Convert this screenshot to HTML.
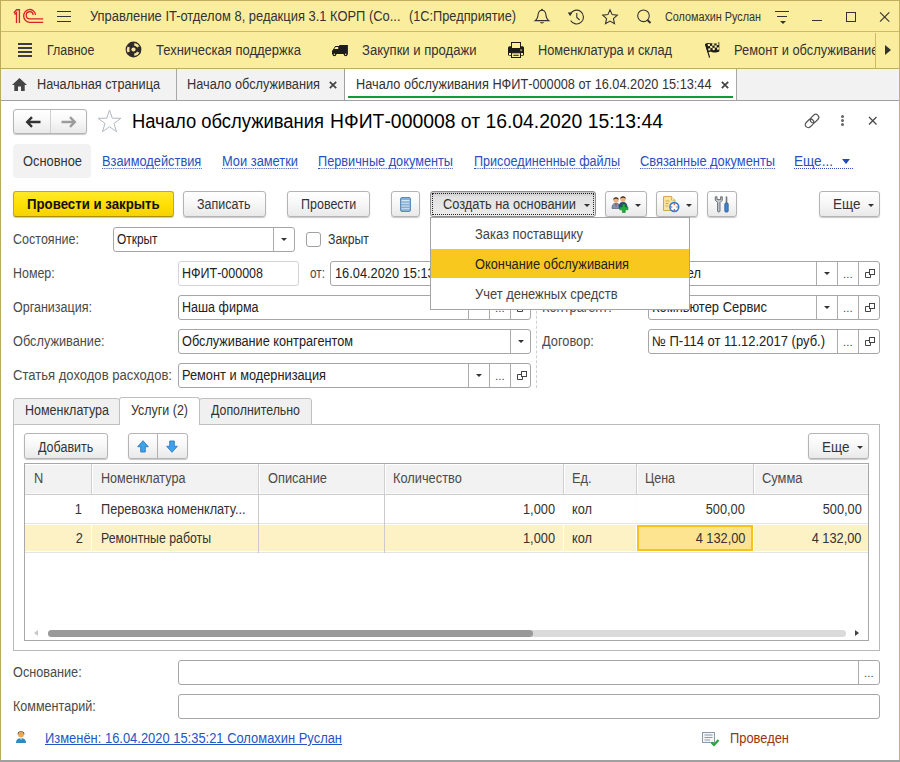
<!DOCTYPE html>
<html><head><meta charset="utf-8">
<style>
*{box-sizing:border-box;margin:0;padding:0}
html,body{width:900px;height:762px;overflow:hidden;background:#fff}
body{font-family:"Liberation Sans",sans-serif;font-size:14px;color:#333;position:relative}
.a{position:absolute}
.x{position:absolute;white-space:nowrap;font-size:14px;line-height:16px;color:#333;transform:scaleX(.915);transform-origin:0 0}
.r{transform-origin:100% 0;text-align:right}
.lb{color:#4a4a4a}
.lk{color:#2850be}
.lk i{position:absolute;left:0;right:0;top:15px;height:0;border-bottom:1px dotted #2850be}
.btn{position:absolute;border:1px solid #b4b4b4;border-radius:3px;background:linear-gradient(#ffffff,#f8f8f8 45%,#e9e9e9);box-shadow:0 1px 1px rgba(0,0,0,.22)}
.f{position:absolute;height:25px;border:1px solid #a6a6a6;border-radius:3px;background:#fff}
.f .t{position:absolute;left:3px;top:3px;white-space:nowrap;line-height:16px;color:#222;font-size:14px;transform:scaleX(.915);transform-origin:0 0}
.f .d{position:absolute;top:0;width:1px;height:23px;background:#ababab}
.f .ar{position:absolute;top:10px;width:0;height:0;border-left:3px solid transparent;border-right:3px solid transparent;border-top:3.5px solid #333}
.f .el{position:absolute;top:4px;font-size:11.5px;line-height:16px;color:#444;letter-spacing:0}
.f svg{position:absolute;top:6px}
.ar2{position:absolute;width:0;height:0;border-left:3px solid transparent;border-right:3px solid transparent;border-top:3.5px solid #333}
</style></head><body>
<div class="a" style="left:0;top:0;width:900px;height:32px;background:#fbed9e;border-bottom:1px solid #cdbb62"></div>
<div class="a" style="left:0;top:32px;width:900px;height:37px;background:#fbed9e;border-bottom:1px solid #bead5e"></div>
<div class="a" style="left:0;top:69px;width:900px;height:32px;background:#f2f2f2;border-bottom:1px solid #a0a0a4"></div>
<!-- 1C logo -->
<svg class="a" style="left:13px;top:8px" width="32" height="17" viewBox="0 0 32 17"><g fill="none" stroke="#dc2128" stroke-width="1.350"><path d="M0.900 5 L3.600 1.700 H6.400 V14.900"/><path d="M1.500 6.600 L3.500 4.600 V14.900"/><path d="M22.600 6.800 A6 6.400 0 1 0 16.800 14.300 H30.200"/><path d="M20.200 6.800 A3.500 3.600 0 1 0 16.800 10.900 H30.200"/></g></svg>
<!-- hamburger -->
<div class="a" style="left:57px;top:11px;width:14px;height:1px;background:#333"></div>
<div class="a" style="left:57px;top:16px;width:14px;height:1px;background:#333"></div>
<div class="a" style="left:57px;top:21px;width:14px;height:1px;background:#333"></div>
<span class="x" style="transform:scaleX(0.9225);left:90px;top:8px">Управление IT-отделом 8, редакция 3.1 КОРП (Со...</span>
<span class="x" style="transform:scaleX(0.9114);left:409px;top:8px">(1С:Предприятие)</span>
<!-- bell -->
<svg class="a" style="left:533px;top:8px" width="18" height="18" viewBox="0 0 18 18"><g fill="none" stroke="#333" stroke-width="1.100"><path d="M2.300 12.600 C5 11 4.800 8 5.200 6 C5.700 3.200 7.400 2.200 9 2.200 C10.600 2.200 12.300 3.200 12.800 6 C13.200 8 13 11 15.700 12.600 Z"/></g><circle cx="9" cy="1.700" r="0.900" fill="#333"/><path d="M6.800 14.200 H11.200 Q9 16.800 6.800 14.200 Z" fill="#333"/></svg>
<!-- history -->
<svg class="a" style="left:567px;top:8px" width="18" height="18" viewBox="0 0 18 18"><g fill="none" stroke="#333" stroke-width="1.100"><path d="M3.300 6.200 A6.900 6.900 0 1 1 3.600 12.500"/><path d="M9.800 5 V9.400 L12.600 12"/></g><path d="M0.800 4.600 L5.400 4.200 L3.200 8.200 Z" fill="#333"/></svg>
<!-- star -->
<svg class="a" style="left:601px;top:7.700px" width="18" height="18" viewBox="0 0 18 18"><path d="M9 1.800 L11.100 6.600 L16.300 7.100 L12.400 10.600 L13.500 15.700 L9 13.100 L4.500 15.700 L5.600 10.600 L1.700 7.100 L6.900 6.600 Z" fill="none" stroke="#333" stroke-width="1.1" stroke-linejoin="miter"/></svg>
<!-- search -->
<svg class="a" style="left:635px;top:8px" width="18" height="18" viewBox="0 0 18 18"><g fill="none" stroke="#333" stroke-width="1.1"><circle cx="8.500" cy="7.800" r="5.800"/><path d="M12.500 12 L15.500 15" stroke-width="2"/></g></svg>
<span class="x" style="transform:scaleX(0.9001);left:665px;top:9px;font-size:12px">Соломахин Руслан</span>
<!-- filter -->
<div class="a" style="left:775px;top:11px;width:14px;height:1px;background:#333"></div>
<div class="a" style="left:777px;top:16px;width:10px;height:1px;background:#333"></div>
<div class="ar2" style="left:779.500px;top:21px;border-top-color:#333"></div>
<!-- min max close -->
<div class="a" style="left:812px;top:20px;width:10px;height:1px;background:#333"></div>
<div class="a" style="left:846px;top:12px;width:10px;height:10px;border:1px solid #333"></div>
<svg class="a" style="left:879px;top:11px" width="12" height="12" viewBox="0 0 12 12"><path d="M1 1.300 L10.300 10.600 M10.300 1.300 L1 10.600" stroke="#333" stroke-width="1.1"/></svg>
<!-- section bar -->
<div class="a" style="left:18px;top:43px;width:14px;height:2px;background:#3a3d48"></div>
<div class="a" style="left:18px;top:47px;width:14px;height:2px;background:#3a3d48"></div>
<div class="a" style="left:18px;top:51px;width:14px;height:2px;background:#3a3d48"></div>
<div class="a" style="left:18px;top:55px;width:14px;height:2px;background:#3a3d48"></div>
<span class="x" style="transform:scaleX(0.8860);left:47px;top:42px">Главное</span>
<svg class="a" style="left:125.300px;top:41.300px" width="17" height="17" viewBox="0 0 17 17"><circle cx="8.500" cy="8.500" r="7.900" fill="#2f2a2c"/><circle cx="8.500" cy="8.500" r="2.100" fill="#f6e596"/><path d="M9.25 3.15 A5.4 5.4 0 0 1 13.27 5.96 M13.27 11.04 A5.4 5.4 0 0 1 9.25 13.85 M3.69 10.95 A5.4 5.4 0 0 1 3.69 6.05" fill="none" stroke="#f6e596" stroke-width="2.500"/></svg>
<span class="x" style="transform:scaleX(0.9287);left:156px;top:42px">Техническая поддержка</span>
<svg class="a" style="left:331px;top:44px" width="18" height="13" viewBox="0 0 18 13"><path d="M1 9.900 V7 L4.300 2 H8.300 V1 H16.900 V9.900 Z" fill="#1c1c1c"/><path d="M4.600 2.900 H7.200 V5 H3.200 Z" fill="#fbed9e"/><circle cx="3.400" cy="10.300" r="1.900" fill="#1c1c1c"/><circle cx="3.400" cy="10.300" r="0.700" fill="#fbed9e"/><circle cx="14.700" cy="10.300" r="1.900" fill="#1c1c1c"/><circle cx="14.700" cy="10.300" r="0.700" fill="#fbed9e"/></svg>
<span class="x" style="transform:scaleX(0.9336);left:362px;top:42px">Закупки и продажи</span>
<svg class="a" style="left:507px;top:41px" width="18" height="18" viewBox="0 0 18 18"><rect x="1" y="5.300" width="16" height="9.500" rx="1.500" fill="#1c1c1c"/><rect x="4.500" y="1.500" width="9" height="6" fill="#fbed9e" stroke="#1c1c1c"/><rect x="13.200" y="8.200" width="1.900" height="1.900" fill="#9a9060"/><rect x="2" y="12" width="2" height="2" fill="#fbed9e"/><rect x="14" y="12" width="2" height="2" fill="#fbed9e"/><rect x="4.500" y="11.800" width="9" height="4.700" fill="#fbed9e" stroke="#1c1c1c"/><path d="M6.300 14.300 H11.700" stroke="#1c1c1c" stroke-width="1"/></svg>
<span class="x" style="transform:scaleX(0.9118);left:538px;top:42px">Номенклатура и склад</span>
<svg class="a" style="left:704px;top:41px" width="18" height="18" viewBox="0 0 18 18"><path d="M1.600 3.200 L5.600 16.600" stroke="#1c1c1c" stroke-width="1.200"/><path d="M1 3.200 C4.500 0.200 9 4.200 15.300 1.200 L15.300 10.500 C10 13.200 6.500 9.200 3.600 11.400 Z" fill="#1c1c1c"/><g fill="#fbed9e" transform="rotate(-6 8 6)"><rect x="4" y="2.600" width="2.200" height="2.200"/><rect x="8.400" y="2.600" width="2.200" height="2.200"/><rect x="12.800" y="2.600" width="2" height="2.200"/><rect x="6.200" y="4.800" width="2.200" height="2.200"/><rect x="10.600" y="4.800" width="2.200" height="2.200"/><rect x="4" y="7" width="2.200" height="2.200"/><rect x="8.400" y="7" width="2.200" height="2.200"/><rect x="12.800" y="7" width="2" height="2.200"/></g></svg>
<div class="a" style="left:734px;top:36px;width:141px;height:30px;overflow:hidden"><span class="x" style="left:0;top:6px;transform:scaleX(.918)">Ремонт и обслуживание</span></div>
<div class="a" style="left:875px;top:33px;width:24px;height:35px;background:#fbed9e;border-left:1px solid #cdbb62"></div>
<div class="a" style="left:885px;top:45px;width:0;height:0;border-top:5px solid transparent;border-bottom:5px solid transparent;border-left:6px solid #333"></div>
<!-- open tabs -->
<svg class="a" style="left:11px;top:77px" width="17" height="15" viewBox="0 0 17 15"><path d="M8.500 1 L16 8 H13.700 V14 H10 V9.500 H7 V14 H3.300 V8 H1 Z" fill="#444"/></svg>
<span class="x" style="transform:scaleX(0.9080);left:37px;top:76px">Начальная страница</span>
<div class="a" style="left:176px;top:69px;width:1px;height:31px;background:#a8a8a8"></div>
<span class="x" style="transform:scaleX(0.9108);left:187px;top:76px">Начало обслуживания</span>
<svg class="a" style="left:329px;top:81px" width="8" height="8" viewBox="0 0 8 8"><path d="M0.800 0.800 L7.200 7.200 M7.200 0.800 L0.800 7.200" stroke="#444" stroke-width="1.700"/></svg>
<div class="a" style="left:344px;top:69px;width:1px;height:31px;background:#a0a0a0"></div>
<div class="a" style="left:345px;top:69px;width:391px;height:31px;background:#fff"></div>
<div class="a" style="left:736px;top:69px;width:1px;height:31px;background:#a8a8a8"></div>
<span class="x" style="transform:scaleX(0.9097);left:355.500px;top:76px">Начало обслуживания НФИТ-000008 от 16.04.2020 15:13:44</span>
<svg class="a" style="left:721px;top:81px" width="8" height="8" viewBox="0 0 8 8"><path d="M0.800 0.800 L7.200 7.200 M7.200 0.800 L0.800 7.200" stroke="#444" stroke-width="1.700"/></svg>
<div class="a" style="left:348px;top:96px;width:385px;height:2px;background:#0f9a3c"></div>

<!-- nav arrows -->
<div class="btn" style="left:13px;top:109px;width:74px;height:25px"></div>
<div class="a" style="left:50px;top:110px;width:1px;height:23px;background:#d0d0d0"></div>
<svg class="a" style="left:24.500px;top:115.500px" width="16" height="12" viewBox="0 0 16 12"><path d="M15.500 6 H3 M7 1.200 L2.200 6 L7 10.800" fill="none" stroke="#333" stroke-width="2.400"/></svg>
<svg class="a" style="left:60.500px;top:115.500px" width="16" height="12" viewBox="0 0 16 12"><path d="M0.500 6 H13 M9 1.200 L13.800 6 L9 10.800" fill="none" stroke="#9c9c9c" stroke-width="2.400"/></svg>
<!-- star -->
<svg class="a" style="left:97px;top:108px" width="25" height="27" viewBox="0 0 25 27"><path d="M12.50 2.00 L15.26 10.20 L23.91 10.29 L16.97 15.45 L19.55 23.71 L12.50 18.70 L5.45 23.71 L8.03 15.45 L1.09 10.29 L9.74 10.20 Z" fill="none" stroke="#b0b8c2" stroke-width="1"/></svg>
<span class="x" style="transform:scaleX(0.9203);left:132px;top:110px;font-size:20px;line-height:22px;color:#000">Начало обслуживания</span><span class="x" style="transform:scaleX(0.9677);left:330px;top:110px;font-size:20px;line-height:22px;color:#000">НФИТ-000008 от 16.04.2020 15:13:44</span>
<!-- link, dots, close -->
<svg class="a" style="left:803px;top:112px" width="18" height="18" viewBox="0 0 18 18"><g fill="none" stroke="#555" stroke-width="1.200" transform="rotate(-44 9 9)"><rect x="0.800" y="6" width="9.500" height="6" rx="3"/><rect x="7.700" y="6" width="9.500" height="6" rx="3"/></g></svg>
<div class="a" style="left:841px;top:115px;width:3px;height:3px;border-radius:2px;background:#666"></div>
<div class="a" style="left:841px;top:119px;width:3px;height:3px;border-radius:2px;background:#666"></div>
<div class="a" style="left:841px;top:123px;width:3px;height:3px;border-radius:2px;background:#666"></div>
<svg class="a" style="left:868px;top:116px" width="10" height="10" viewBox="0 0 10 10"><path d="M1 1 L8.500 8.500 M8.500 1 L1 8.500" stroke="#444" stroke-width="1.200"/></svg>
<!-- sub nav -->
<div class="a" style="left:13px;top:144px;width:78px;height:34px;background:#f2f2f2;border-radius:4px"></div>
<span class="x" style="transform:scaleX(0.9196);left:23px;top:153px">Основное</span>
<span class="x lk" style="transform:scaleX(0.9152);left:102px;top:153px">Взаимодействия<i></i></span>
<span class="x lk" style="transform:scaleX(0.9176);left:221.700px;top:153px">Мои заметки<i></i></span>
<span class="x lk" style="transform:scaleX(0.9100);left:318.300px;top:153px">Первичные документы<i></i></span>
<span class="x lk" style="transform:scaleX(0.9004);left:474px;top:153px">Присоединенные файлы<i></i></span>
<span class="x lk" style="transform:scaleX(0.9179);left:640px;top:153px">Связанные документы<i></i></span>
<span class="x lk" style="transform:scaleX(0.9712);left:794px;top:153px">Еще...</span><div class="a" style="left:794px;top:168px;width:59px;height:0;border-bottom:1px dotted #2850be"></div>
<div class="a" style="left:842px;top:159px;width:0;height:0;border-left:4.500px solid transparent;border-right:4.500px solid transparent;border-top:5px solid #2448b8"></div>
<!-- command bar -->
<div class="btn" style="left:13px;top:191px;width:161px;height:26px;background:linear-gradient(#ffe92a,#ffe004 50%,#f6d200);border-color:#c8ac00 #c8ac00 #a89000"></div><span class="x" style="transform:scaleX(0.9453);left:27.300px;top:196px;font-weight:bold;color:#111">Провести и закрыть</span>
<div class="btn" style="left:183px;top:191px;width:83px;height:26px"></div><span class="x" style="transform:scaleX(0.8926);left:197.300px;top:196px">Записать</span>
<div class="btn" style="left:287px;top:191px;width:83px;height:26px"></div><span class="x" style="transform:scaleX(0.8928);left:300.700px;top:196px">Провести</span>
<div class="btn" style="left:390.500px;top:191px;width:29px;height:26px"></div>
<svg class="a" style="left:399.500px;top:196.500px" width="11" height="15" viewBox="0 0 11 15"><rect x="0.500" y="0.500" width="10" height="14" rx="1.500" fill="#86aed2" stroke="#5e8cb6"/><g stroke="#d6e8f6" stroke-width="1.100"><path d="M1.500 3.600 H9.500 M1.500 6.300 H9.500 M1.500 9 H9.500 M1.500 11.700 H9.500"/></g></svg>
<div class="a" style="left:429.500px;top:191px;width:166.500px;height:26px;border:1px solid #8e8e8e;border-radius:3px;background:linear-gradient(#c6c6c6,#e2e2e2 22%,#ececec)"></div>
<div class="a" style="left:431.500px;top:193px;width:162.500px;height:22px;border:1px dotted #222"></div>
<span class="x" style="transform:scaleX(0.9157);left:443px;top:196px">Создать на основании</span>
<div class="ar2" style="left:584px;top:204px"></div>
<div class="btn" style="left:605px;top:191px;width:42px;height:26px"></div>
<div class="ar2" style="left:635px;top:204px"></div>
<div class="btn" style="left:656px;top:191px;width:42px;height:26px"></div>
<div class="ar2" style="left:686px;top:204px"></div>
<div class="btn" style="left:707px;top:191px;width:30px;height:26px"></div>
<div class="btn" style="left:819px;top:191px;width:61px;height:26px"></div><span class="x" style="transform:scaleX(0.9614);left:833.300px;top:196px">Еще</span>
<div class="ar2" style="left:868px;top:204px"></div>
<!-- users+ icon -->
<svg class="a" style="left:611px;top:195px" width="18" height="18" viewBox="0 0 18 18"><path d="M1 13.500 C1 9.500 2.800 8.200 5 8.200 C7.200 8.200 9 9.500 9 13.500 Z" fill="#7d93b4" stroke="#4a5f80" stroke-width="0.700"/><path d="M4.300 8.400 L5 12.500 L5.700 8.400 Z" fill="#c0392b"/><circle cx="5" cy="5" r="2.700" fill="#e8b47c"/><path d="M2.300 4.800 C2.100 1.300 7.900 1.300 7.700 4.800 C6.500 3.300 3.500 3.300 2.300 4.800 Z" fill="#3a2a20"/><path d="M8 12.500 C8 8.500 9.800 7.200 12 7.200 C14.200 7.200 16 8.500 16 12.500 Z" fill="#2c4a7c" stroke="#1d3358" stroke-width="0.700"/><circle cx="12" cy="4" r="2.700" fill="#e8b47c"/><path d="M9.300 3.800 C9.100 0.300 14.900 0.300 14.700 3.800 C13.500 2.300 10.500 2.300 9.300 3.800 Z" fill="#3a2a20"/><path d="M11.400 9.300 H14.200 V12 H16.900 V14.800 H14.200 V17.500 H11.400 V14.800 H8.700 V12 H11.400 Z" fill="#1fae3c" stroke="#0e7a24" stroke-width="0.600"/></svg>
<!-- doc clock icon -->
<svg class="a" style="left:662px;top:196px" width="18" height="17" viewBox="0 0 18 17"><path d="M1.500 0.500 H9.500 L13 4 V14.500 H1.500 Z" fill="#f9e3a0" stroke="#d0aa48" stroke-width="1"/><path d="M9.500 0.500 V4 H13" fill="#fff6d8" stroke="#d0aa48" stroke-width="0.800"/><path d="M3.500 5 H7.500 M3.500 7.500 H6.500 M3.500 10 H6" stroke="#cfa94a" stroke-width="1"/><circle cx="12.300" cy="11" r="4.400" fill="#fff" stroke="#3a7cd0" stroke-width="1.600"/><path d="M12.300 7.600 V9 M12.300 13 V14.400 M8.900 11 H10.300 M14.300 11 H15.700" stroke="#d0302a" stroke-width="1.100"/></svg>
<!-- tools icon -->
<svg class="a" style="left:714px;top:196px" width="16" height="17" viewBox="0 0 16 17"><path d="M1.300 0.800 V4.300 L3.600 6.600 V15 Q3.600 16 4.800 16 Q6 16 6 15 V6.600 L8.300 4.300 V0.800 H6.600 V3.600 H3 V0.800 Z" fill="#c4c8ce" stroke="#60656c" stroke-width="0.900"/><path d="M12.500 0.500 V7.500" stroke="#70757c" stroke-width="1.600"/><rect x="10.800" y="7" width="3.400" height="9" rx="1" fill="#3f86d0" stroke="#245a98" stroke-width="0.800"/></svg>
<!-- fields -->
<span class="x lb" style="transform:scaleX(0.8949);left:13.300px;top:231px">Состояние:</span>
<div class="f" style="left:113px;top:227px;width:182px"><span class="t" style="transform:scaleX(0.8493);left:3.300px">Открыт</span><i class="d" style="left:159px"></i><i class="ar" style="left:167px"></i></div>
<div class="a" style="left:306px;top:232px;width:15px;height:15px;border:1px solid #a0a0a0;border-radius:3px;background:#fff"></div>
<span class="x" style="transform:scaleX(0.8791);left:327.500px;top:231px">Закрыт</span>
<span class="x lb" style="transform:scaleX(0.8875);left:13.300px;top:265px">Номер:</span>
<div class="f" style="left:178px;top:261px;width:121px;border-color:#d4d4d4"><span class="t" style="transform:scaleX(0.8926);left:2.800px">НФИТ-000008</span></div>
<span class="x lb" style="transform:scaleX(0.8436);left:309.500px;top:265px">от:</span>
<div class="f" style="left:330px;top:261px;width:201px"><span class="t" style="left:4px">16.04.2020 15:13:44</span></div>
<span class="x lb" style="transform:scaleX(0.8944);left:13.300px;top:299px">Организация:</span>
<div class="f" style="left:178px;top:295px;width:353px"><span class="t" style="transform:scaleX(0.8964);left:2.800px">Наша фирма</span><i class="d" style="left:289px"></i><i class="ar" style="left:297px"></i><i class="d" style="left:310px"></i><span class="el" style="left:316px">...</span><i class="d" style="left:331px"></i><svg style="left:337px" width="12" height="11" viewBox="0 0 12 11"><rect x="5.500" y="1.500" width="5" height="5" fill="none" stroke="#444"/><path d="M5.500 4.500 H1.500 V9.500 H6.500 V6.500" fill="none" stroke="#444"/></svg></div>
<span class="x lb" style="transform:scaleX(0.9109);left:13.300px;top:333px">Обслуживание:</span>
<div class="f" style="left:178px;top:329px;width:353px"><span class="t" style="transform:scaleX(0.9080);left:2.800px">Обслуживание контрагентом</span><i class="d" style="left:331px"></i><i class="ar" style="left:339px"></i></div>
<span class="x lb" style="transform:scaleX(0.9320);left:13.300px;top:367px">Статья доходов расходов:</span>
<div class="f" style="left:178px;top:363px;width:353px"><span class="t" style="transform:scaleX(0.9132);left:2.800px">Ремонт и модернизация</span><i class="d" style="left:289px"></i><i class="ar" style="left:297px"></i><i class="d" style="left:310px"></i><span class="el" style="left:316px">...</span><i class="d" style="left:331px"></i><svg style="left:337px" width="12" height="11" viewBox="0 0 12 11"><rect x="5.500" y="1.500" width="5" height="5" fill="none" stroke="#444"/><path d="M5.500 4.500 H1.500 V9.500 H6.500 V6.500" fill="none" stroke="#444"/></svg></div>
<div class="a" style="left:536px;top:222px;width:0;height:166px;border-left:1px dashed #d0d0d0"></div>
<!-- right column -->
<span class="x lb" style="left:542px;top:265px">Подразделение:</span>
<div class="f" style="left:648px;top:261px;width:232px"><span class="t" style="left:3px">IT-отдел</span><i class="d" style="left:167px"></i><i class="ar" style="left:175px"></i><i class="d" style="left:188px"></i><span class="el" style="left:194px">...</span><i class="d" style="left:209px"></i><svg style="left:215px" width="12" height="11" viewBox="0 0 12 11"><rect x="5.500" y="1.500" width="5" height="5" fill="none" stroke="#444"/><path d="M5.500 4.500 H1.500 V9.500 H6.500 V6.500" fill="none" stroke="#444"/></svg></div>
<span class="x lb" style="left:542px;top:299px">Контрагент:</span>
<div class="f" style="left:648px;top:295px;width:232px"><span class="t" style="transform:scaleX(0.9252);left:2.800px">Компьютер Сервис</span><i class="d" style="left:167px"></i><i class="ar" style="left:175px"></i><i class="d" style="left:188px"></i><span class="el" style="left:194px">...</span><i class="d" style="left:209px"></i><svg style="left:215px" width="12" height="11" viewBox="0 0 12 11"><rect x="5.500" y="1.500" width="5" height="5" fill="none" stroke="#444"/><path d="M5.500 4.500 H1.500 V9.500 H6.500 V6.500" fill="none" stroke="#444"/></svg></div>
<span class="x lb" style="left:542px;top:333px">Договор:</span>
<div class="f" style="left:648px;top:329px;width:232px"><span class="t" style="transform:scaleX(0.9273);left:2.800px">№ П-114 от 11.12.2017 (руб.)</span><i class="d" style="left:188px"></i><span class="el" style="left:194px">...</span><i class="d" style="left:209px"></i><svg style="left:215px" width="12" height="11" viewBox="0 0 12 11"><rect x="5.500" y="1.500" width="5" height="5" fill="none" stroke="#444"/><path d="M5.500 4.500 H1.500 V9.500 H6.500 V6.500" fill="none" stroke="#444"/></svg></div>

<!-- tab panel -->
<div class="a" style="left:13px;top:424px;width:867px;height:227px;border:1px solid #bababa;background:#fff"></div>
<div class="a" style="left:13px;top:398px;width:107px;height:27px;border:1px solid #c0c0c0;border-radius:3px 3px 0 0;background:#f0f0f0"></div>
<div class="a" style="left:199px;top:398px;width:113px;height:27px;border:1px solid #c0c0c0;border-radius:3px 3px 0 0;background:#f0f0f0"></div>
<div class="a" style="left:119px;top:397px;width:81px;height:28px;border:1px solid #c0c0c0;border-bottom:none;border-radius:3px 3px 0 0;background:#fff"></div>
<span class="x" style="transform:scaleX(0.8941);left:24.500px;top:402px">Номенклатура</span>
<span class="x" style="transform:scaleX(0.8898);left:130.800px;top:402px">Услуги (2)</span>
<span class="x" style="transform:scaleX(0.8832);left:210.800px;top:402px">Дополнительно</span>
<div class="btn" style="left:24px;top:433px;width:84px;height:26px"></div>
<span class="x" style="transform:scaleX(0.8937);left:38px;top:439px">Добавить</span>
<div class="btn" style="left:128px;top:433px;width:60px;height:26px"></div>
<div class="a" style="left:157px;top:434px;width:1px;height:24px;background:#b0b0b0"></div>
<svg class="a" style="left:136.500px;top:439.500px" width="12" height="13" viewBox="0 0 12 13"><path d="M6 0.700 L11.300 6.700 H8.300 V12 H3.700 V6.700 H0.700 Z" fill="#3fa2ea" stroke="#2a7cc4" stroke-width="0.900"/></svg>
<svg class="a" style="left:165.500px;top:439.500px" width="12" height="13" viewBox="0 0 12 13"><path d="M6 12.300 L11.300 6.300 H8.300 V1 H3.700 V6.300 H0.700 Z" fill="#3fa2ea" stroke="#2a7cc4" stroke-width="0.900"/></svg>
<div class="btn" style="left:808px;top:433px;width:61px;height:26px"></div>
<span class="x" style="transform:scaleX(0.9614);left:822px;top:439px">Еще</span>
<div class="ar2" style="left:857px;top:446px"></div>
<!-- table -->
<div class="a" style="left:24px;top:463px;width:845px;height:178px;border:1px solid #a8a8a8;background:#fff"></div>
<div class="a" style="left:25px;top:464px;width:843px;height:30px;background:#f2f2f2;border-top:1px solid #fff;border-bottom:1px solid #fafafa"></div>
<div class="a" style="left:25px;top:494px;width:843px;height:1px;background:#cccccc"></div>
<div class="a" style="left:25px;top:523px;width:843px;height:1px;background:#e4e4e4"></div>
<div class="a" style="left:25px;top:525px;width:843px;height:26px;background:#fdf1c6"></div>
<div class="a" style="left:25px;top:552px;width:843px;height:1px;background:#e4e4e4"></div>
<!-- col dividers: header gray+white, rows light -->
<div class="a" style="left:91px;top:464px;width:1px;height:30px;background:#cfcfcf"></div><div class="a" style="left:92px;top:464px;width:1px;height:30px;background:#fff"></div><div class="a" style="left:91px;top:495px;width:1px;height:28px;background:#fdfdfd"></div><div class="a" style="left:91px;top:525px;width:1px;height:26px;background:#fff"></div>
<div class="a" style="left:258px;top:464px;width:1px;height:30px;background:#cfcfcf"></div><div class="a" style="left:259px;top:464px;width:1px;height:30px;background:#fff"></div><div class="a" style="left:258px;top:495px;width:1px;height:58px;background:#cacaca"></div>
<div class="a" style="left:384px;top:464px;width:1px;height:30px;background:#cfcfcf"></div><div class="a" style="left:385px;top:464px;width:1px;height:30px;background:#fff"></div><div class="a" style="left:384px;top:495px;width:1px;height:58px;background:#cacaca"></div>
<div class="a" style="left:563px;top:464px;width:1px;height:30px;background:#cfcfcf"></div><div class="a" style="left:564px;top:464px;width:1px;height:30px;background:#fff"></div><div class="a" style="left:563px;top:495px;width:1px;height:28px;background:#fdfdfd"></div><div class="a" style="left:563px;top:525px;width:1px;height:26px;background:#fff"></div>
<div class="a" style="left:636px;top:464px;width:1px;height:30px;background:#cfcfcf"></div><div class="a" style="left:637px;top:464px;width:1px;height:30px;background:#fff"></div><div class="a" style="left:636px;top:495px;width:1px;height:28px;background:#fdfdfd"></div><div class="a" style="left:636px;top:525px;width:1px;height:26px;background:#fff"></div>
<div class="a" style="left:753px;top:464px;width:1px;height:30px;background:#cfcfcf"></div><div class="a" style="left:754px;top:464px;width:1px;height:30px;background:#fff"></div><div class="a" style="left:753px;top:495px;width:1px;height:28px;background:#fdfdfd"></div><div class="a" style="left:753px;top:525px;width:1px;height:26px;background:#fff"></div>
<!-- selected cell -->
<div class="a" style="left:637px;top:525px;width:116px;height:26px;background:#fde490;border:2px solid #f5c31c"></div>
<span class="x lb" style="left:33.800px;top:470px">N</span>
<span class="x lb" style="transform:scaleX(0.8983);left:100.800px;top:470px">Номенклатура</span>
<span class="x lb" style="left:267.500px;top:470px">Описание</span>
<span class="x lb" style="left:393.300px;top:470px">Количество</span>
<span class="x lb" style="left:572px;top:470px">Ед.</span>
<span class="x lb" style="transform:scaleX(0.8910);left:645.400px;top:470px">Цена</span>
<span class="x lb" style="transform:scaleX(0.9205);left:762.200px;top:470px">Сумма</span>
<span class="x r" style="right:818px;top:501px">1</span>
<span class="x" style="transform:scaleX(0.9071);left:100.800px;top:501px">Перевозка номенклату...</span>
<span class="x r" style="right:345px;top:501px">1,000</span>
<span class="x" style="left:572px;top:501px">кол</span>
<span class="x r" style="right:155px;top:501px">500,00</span>
<span class="x r" style="right:38.500px;top:501px">500,00</span>
<span class="x r" style="right:817.500px;top:530px">2</span>
<span class="x" style="transform:scaleX(0.8795);left:100.800px;top:530px">Ремонтные работы</span>
<span class="x r" style="right:345px;top:530px">1,000</span>
<span class="x" style="left:572px;top:530px">кол</span>
<span class="x r" style="right:155px;top:530px">4 132,00</span>
<span class="x r" style="right:38.500px;top:530px">4 132,00</span>
<!-- scrollbar -->
<div class="a" style="left:48px;top:629.500px;width:798px;height:7px;border-radius:3.500px;background:#dadada"></div>
<div class="a" style="left:48px;top:629.500px;width:485px;height:7px;border-radius:3.500px;background:#999"></div>
<div class="a" style="left:34px;top:630px;width:0;height:0;border-top:3px solid transparent;border-bottom:3px solid transparent;border-right:4px solid #c8c8c8"></div>
<div class="a" style="left:855px;top:630px;width:0;height:0;border-top:3px solid transparent;border-bottom:3px solid transparent;border-left:4px solid #444"></div>

<span class="x lb" style="transform:scaleX(0.9075);left:13.300px;top:664px">Основание:</span>
<div class="f" style="left:178px;top:660px;width:702px"><i class="d" style="left:679px"></i><span class="el" style="left:685px">...</span></div>
<span class="x lb" style="transform:scaleX(0.8982);left:13.300px;top:698px">Комментарий:</span>
<div class="f" style="left:178px;top:694px;width:702px"></div>
<svg class="a" style="left:15px;top:730px" width="12" height="14" viewBox="0 0 12 14"><path d="M2.600 4.600 C2.200 0.200 9.800 0.200 9.400 4.600 Z" fill="#3a2a1a"/><circle cx="6" cy="4.600" r="2.900" fill="#eaa850"/><path d="M1 13 C1 9.300 3 8.200 6 8.200 C9 8.200 11 9.300 11 13 Z" fill="#2b8cc4"/><path d="M5.200 8.200 L6 10.200 L6.800 8.200 Z" fill="#fff"/></svg>
<span class="x" style="transform:scaleX(0.9233);left:45px;top:730px;color:#2455c2;text-decoration:underline">Изменён: 16.04.2020 15:35:21 Соломахин Руслан</span>
<svg class="a" style="left:702px;top:732px" width="18" height="15" viewBox="0 0 18 15"><rect x="0.500" y="0.500" width="12" height="10" fill="#f4f6f8" stroke="#8a98a8"/><path d="M2.500 3 H10.500 M2.500 5.500 H10.500 M2.500 8 H8" stroke="#8a98a8" stroke-width="1"/><path d="M9.500 10.500 L12 13 L16.500 8" fill="none" stroke="#22a53a" stroke-width="2.200"/></svg>
<span class="x" style="transform:scaleX(0.9205);left:730px;top:730px;color:#9a3412">Проведен</span>

<div class="a" style="left:430px;top:217px;width:260px;height:93px;border:1px solid #a4a4a4;background:#fff"></div>
<div class="a" style="left:431px;top:249px;width:258px;height:29px;background:#f9c81e"></div>
<span class="x" style="transform:scaleX(0.9223);left:474.500px;top:226px;color:#444">Заказ поставщику</span>
<span class="x" style="transform:scaleX(0.9147);left:474.500px;top:256px;color:#222">Окончание обслуживания</span>
<span class="x" style="transform:scaleX(0.9225);left:474.500px;top:286px;color:#444">Учет денежных средств</span>

<div class="a" style="left:0;top:0;width:1px;height:762px;background:#bcab58"></div>
<div class="a" style="left:0;top:0;width:900px;height:1px;background:#c0ae5c"></div>
<div class="a" style="left:898px;top:69px;width:1px;height:31px;background:#f6f6fa"></div>
<div class="a" style="left:899px;top:0;width:1px;height:762px;background:#c4b35a"></div>
<div class="a" style="left:0;top:760px;width:900px;height:2px;background:#a0a0a0"></div>

</body></html>
